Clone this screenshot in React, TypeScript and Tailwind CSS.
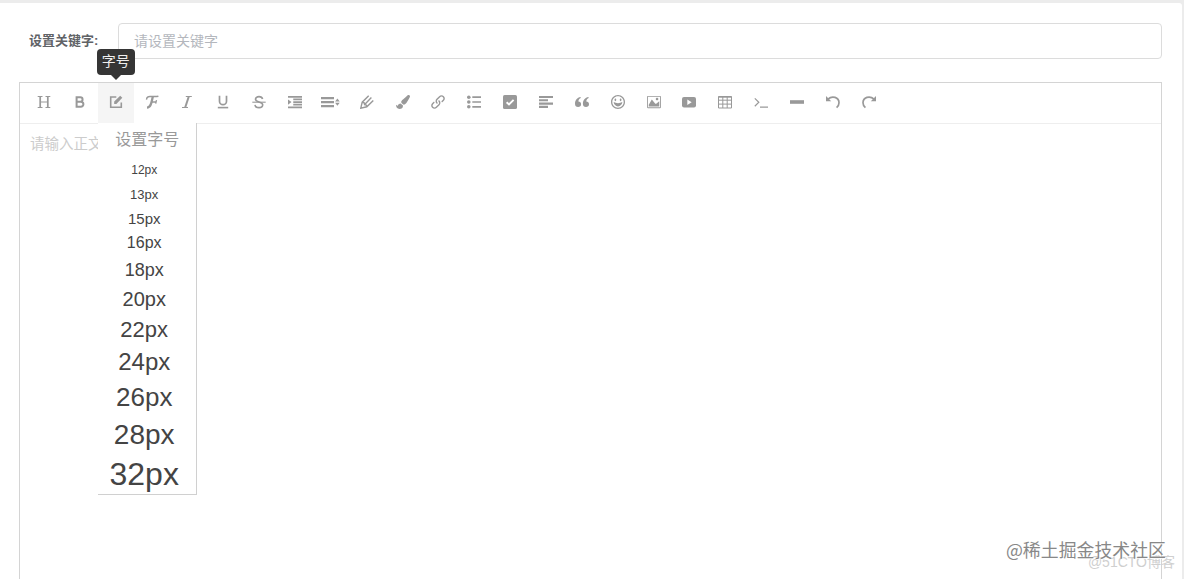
import type { ReactNode } from 'react'
import { ImIndentIncrease, ImLink, ImHappy, ImImage } from 'react-icons/im'
import { FaPaintBrush } from 'react-icons/fa'

const Glyph = ({ children }: { children: ReactNode }) => (
  <svg viewBox="0 0 14 14" className="size-3.5" fill="none" stroke="currentColor" strokeWidth="1.2">
    {children}
  </svg>
)

interface Tool {
  name: string
  icon: ReactNode
}

const tools: Tool[] = [
  {
    name: '标题',
    icon: (
      <Glyph>
        <path d="M3.2 1.5v11M10.8 1.5v11" strokeWidth="1.7" />
        <path d="M.7 1.5h4.8M8.5 1.5h4.8M.7 12.5h4.8M8.5 12.5h4.8M3 7h8" strokeWidth="1" />
      </Glyph>
    ),
  },
  {
    name: '加粗',
    icon: (
      <Glyph>
        <path d="M3.6 2.3h3.7a2.2 2.2 0 0 1 0 4.5H3.6zM3.6 6.8h4.3a2.5 2.5 0 0 1 0 5H3.6z" strokeWidth="2" />
      </Glyph>
    ),
  },
  {
    name: '字号',
    icon: (
      <Glyph>
        <path d="M7.3 2H1.7v10.3h10.6V7.5" strokeWidth="1.6" />
        <path d="M5.2 9V6.6L11.2.7l2.1 2.1L7.4 9z" fill="currentColor" stroke="none" />
      </Glyph>
    ),
  },
  {
    name: '字体',
    icon: (
      <Glyph>
        <path d="M1.6 4.6C1.5 2.2 3.2 1.3 5.2 1.4c3 .1 5 .6 8.2-.2" strokeWidth="1.5" />
        <path d="M7.8 1.8C6.6 6 6.4 12.5 2 12.6" strokeWidth="2.3" />
        <path d="M7 7h4.2M11.5 5.2l-.8 3.4" strokeWidth="1.3" />
      </Glyph>
    ),
  },
  {
    name: '斜体',
    icon: (
      <Glyph>
        <path d="M8.8 1.5l-3.6 11" strokeWidth="2" />
        <path d="M5.8 1.5h6M2 12.5h6" strokeWidth="1" />
      </Glyph>
    ),
  },
  {
    name: '下划线',
    icon: (
      <Glyph>
        <path d="M3.5.8v5.4a3.5 3.5 0 0 0 7 0V.8" strokeWidth="1.7" />
        <path d="M1.8 12.6h10.4" strokeWidth="1.6" />
      </Glyph>
    ),
  },
  {
    name: '删除线',
    icon: (
      <Glyph>
        <path d="M10.6 4C10.2 2.3 8.7 1.6 7 1.6 5 1.6 3.5 2.7 3.5 4.2 3.5 7.8 10.7 6 10.7 9.8c0 1.6-1.6 2.8-3.7 2.8-2.2 0-3.8-1-4-2.8" strokeWidth="1.6" />
        <path d="M.3 7.2h13.4" strokeWidth="1.1" />
      </Glyph>
    ),
  },
  { name: '缩进', icon: <ImIndentIncrease className="size-3.5" /> },
  {
    name: '行高',
    icon: (
      <svg viewBox="0 0 19 14" className="h-3.5 w-[19px]" fill="currentColor">
        <path d="M0 2h13v2.3H0zM0 6h13v2.3H0zM0 10h13v2.3H0zM16.4 3.4l2.3 3.1h-4.6zM16.4 10.8l2.3-3.1h-4.6z" />
      </svg>
    ),
  },
  {
    name: '文字颜色',
    icon: (
      <Glyph>
        <path d="M8.7.7L2.2 7.2.8 13.2l6-1.4 6.5-6.4M4.2 9.9l7.2-7.3M2.2 7.2l2 .5.4 1.9 1.8.5.4 1.7" strokeWidth="1.4" />
      </Glyph>
    ),
  },
  { name: '背景色', icon: <FaPaintBrush className="size-3.5" /> },
  { name: '链接', icon: <ImLink className="size-3.5" /> },
  {
    name: '序列',
    icon: (
      <Glyph>
        <path d="M5.3 2.2H14M5.3 7H14M5.3 11.8H14" strokeWidth="1.7" />
        <g fill="currentColor" stroke="none">
          <circle cx="1.8" cy="2.2" r="1.8" />
          <circle cx="1.8" cy="7" r="1.8" />
          <circle cx="1.8" cy="11.8" r="1.8" />
        </g>
      </Glyph>
    ),
  },
  {
    name: '待办事项',
    icon: (
      <Glyph>
        <rect width="14" height="14" rx="1.6" fill="currentColor" stroke="none" />
        <path d="M3.6 7.2l2.4 2.3 4.6-4.7" stroke="#fff" strokeWidth="1.9" />
      </Glyph>
    ),
  },
  {
    name: '对齐',
    icon: (
      <Glyph>
        <path d="M0 2h14M0 5.3h9M0 8.6h14M0 11.9h9" strokeWidth="2.1" />
      </Glyph>
    ),
  },
  {
    name: '引用',
    icon: (
      <svg viewBox="0 0 14 14" className="size-3.5" fill="currentColor">
        <path d="M5.5 2C2.2 2.7 0 5.2 0 8.7 0 10.9 1.2 12 3.1 12c1.8 0 3-1.1 3-2.8 0-1.6-1.1-2.6-2.7-2.7.1-1.6 1-2.8 2.4-3.4zM13.4 2C10.1 2.7 7.9 5.2 7.9 8.7c0 2.2 1.2 3.3 3.1 3.3 1.8 0 3-1.1 3-2.8 0-1.6-1.1-2.6-2.7-2.7.1-1.6 1-2.8 2.4-3.4z" />
      </svg>
    ),
  },
  { name: '表情', icon: <ImHappy className="size-3.5" /> },
  { name: '图片', icon: <ImImage className="size-3.5" /> },
  {
    name: '视频',
    icon: (
      <Glyph>
        <rect y="1.9" width="14" height="10.6" rx="2" fill="currentColor" stroke="none" />
        <path d="M5.3 4.5v5.4l4.4-2.7z" fill="#fff" stroke="none" />
      </Glyph>
    ),
  },
  {
    name: '表格',
    icon: (
      <Glyph>
        <path d="M.5 1.5h13v11.5H.5zM.5 5.2h13M.5 9.1h13M4.8 1.5V13M9.2 1.5V13" strokeWidth="1" />
        <path d="M.5 2h13" strokeWidth="1.4" />
      </Glyph>
    ),
  },
  {
    name: '代码',
    icon: (
      <Glyph>
        <path d="M.8 3.4l4 3.9-4 3.9M6 12.1h8" strokeWidth="1.2" />
      </Glyph>
    ),
  },
  {
    name: '分割线',
    icon: (
      <Glyph>
        <path d="M0 7h14" strokeWidth="3.6" />
      </Glyph>
    ),
  },
  {
    name: '撤销',
    icon: (
      <Glyph>
        <path d="M2 4.2C6.2.2 13 2.3 13 7.7c0 2.1-1 3.8-2.4 5" strokeWidth="1.7" />
        <path d="M0 1v5.2h5.2z" fill="currentColor" stroke="none" />
      </Glyph>
    ),
  },
  {
    name: '恢复',
    icon: (
      <Glyph>
        <path d="M12 4.2C7.8.2 1 2.3 1 7.7c0 2.1 1 3.8 2.4 5" strokeWidth="1.7" />
        <path d="M14 1v5.2H8.8z" fill="currentColor" stroke="none" />
      </Glyph>
    ),
  },
]

const sizes = [
  { label: '12px', style: 'h-6 text-[12px]' },
  { label: '13px', style: 'h-6 text-[13px]' },
  { label: '15px', style: 'h-6 text-[15px]' },
  { label: '16px', style: 'h-[26px] text-[16px]' },
  { label: '18px', style: 'h-7 text-[18px]' },
  { label: '20px', style: 'h-[30px] text-[20px]' },
  { label: '22px', style: 'h-[31px] text-[22px]' },
  { label: '24px', style: 'h-[34px] text-[24px]' },
  { label: '26px', style: 'h-9 text-[26px]' },
  { label: '28px', style: 'h-[39px] text-[28px]' },
  { label: '32px', style: 'h-10 text-[32px]' },
]

const FontSizeMenu = () => (
  <div className="absolute top-10 left-0 z-10 h-[372px] w-[99px] border-r border-b border-[#d0d0d0] bg-white">
    <p className="flex h-[34px] items-center justify-center pl-px text-[16px] text-[#999]">设置字号</p>
    <ul className="pt-px pr-[5px] text-[#444]">
      {sizes.map((size) => (
        <li key={size.label} className={`flex items-center justify-center leading-none ${size.style}`}>
          {size.label}
        </li>
      ))}
    </ul>
  </div>
)

const Tooltip = ({ text }: { text: string }) => (
  <div className="absolute bottom-[48px] left-1/2 z-20 flex h-[26px] w-[38px] -translate-x-1/2 items-center justify-center rounded-[4px] bg-[#353535] pb-0.5 text-[14px] text-[#eee]">
    {text}
    <span className="absolute top-full border-x-[5px] border-t-[5px] border-x-transparent border-t-[#353535]" />
  </div>
)

const App = () => {
  const active = '字号'

  return (
    <div className="h-[579px] overflow-hidden bg-[#ececec] pt-[3px] pr-[2px] font-['Liberation_Sans','Noto_Sans_CJK_SC',sans-serif]">
      <div className="relative flex h-full flex-col rounded-tr-[3px] bg-white pt-5 pr-5 pl-[19px]">
        <div className="flex h-9 shrink-0 items-center">
          <label className="w-[99px] pb-px pl-2.5 text-[13px] font-bold whitespace-nowrap text-[#606266]">
            设置关键字:
          </label>
          <div className="flex h-9 flex-1 items-center rounded-[4px] border border-[#dcdcdc] pl-[15px] text-[14px] text-[#b4b7bd]">
            请设置关键字
          </div>
        </div>
        <div className="mt-[23px] flex flex-1 flex-col border-x border-t border-[#d4d4d4]">
          <div className="flex h-[41px] shrink-0 border-b border-[#eee] pl-[6px] text-[#999]">
            {tools.map((tool) => (
              <div
                key={tool.name}
                className={`relative flex w-[35.87px] items-center justify-center pb-0.5 ${
                  tool.name === active ? 'bg-[#f5f5f5]' : ''
                }`}
              >
                {tool.icon}
                {tool.name === active && (
                  <>
                    <Tooltip text={active} />
                    <FontSizeMenu />
                  </>
                )}
              </div>
            ))}
          </div>
          <p className="pt-[10px] pl-2.5 text-[14.5px] text-[#ccc]">请输入正文</p>
        </div>
        <span className="absolute right-[7px] bottom-[6px] text-[14px] text-[#cfcfcf]">@51CTO博客</span>
        <span className="absolute right-[16px] bottom-[16px] font-['Noto_Sans_CJK_SC',sans-serif] text-[17.9px] text-[#888] [text-shadow:1px_1px_1px_#ffffff]">
          @稀土掘金技术社区
        </span>
      </div>
    </div>
  )
}

export default App
